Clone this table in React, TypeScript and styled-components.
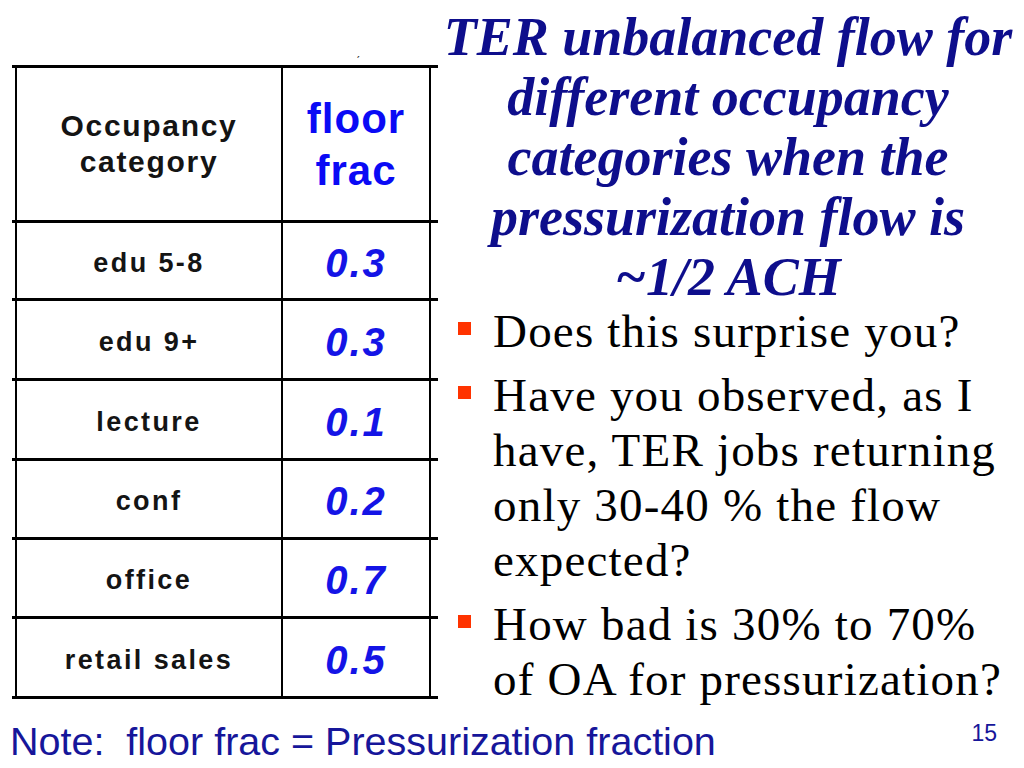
import React from "react";
import styled, { createGlobalStyle } from "styled-components";

const GlobalStyle = createGlobalStyle`
  html, body { margin: 0; padding: 0; background: #ffffff; }
  body { width: 1024px; height: 768px; overflow: hidden; }
`;

const Slide = styled.div`
  width: 1024px;
  height: 768px;
  display: flex;
  flex-direction: column;
  background: #ffffff;
`;

const Main = styled.div`
  height: 718px;
  display: grid;
  grid-template-columns: 440px 1fr;
`;

const LeftCol = styled.div`
  position: relative;
  padding: 65px 0 0 12px;
`;

const Tick = styled.span`
  position: absolute;
  left: 356px;
  top: 44px;
  font: 12px "Liberation Sans", Arial, sans-serif;
  color: #333;
`;

const Table = styled.div`
  width: 426px;
  border-bottom: 3px solid #000;
  font-family: "Liberation Sans", Arial, sans-serif;
`;

const Row = styled.div<{ $h: number }>`
  height: ${(p) => p.$h}px;
  box-sizing: border-box;
  border-top: 3px solid #000;
  display: grid;
  grid-template-columns: 266px 150px;
  padding-left: 3px;
`;

const CatCell = styled.div<{ $head?: boolean }>`
  border-left: 2px solid #000;
  display: flex;
  align-items: center;
  justify-content: center;
  text-align: center;
  color: #141414;
  font-weight: 700;
  font-size: ${(p) => (p.$head ? 30 : 27)}px;
  line-height: ${(p) => (p.$head ? 36 : 30)}px;
  letter-spacing: ${(p) => (p.$head ? 1.7 : 2.4)}px;
  padding-top: ${(p) => (p.$head ? 0 : 4)}px;
`;

const ValCell = styled.div<{ $head?: boolean }>`
  border-left: 2px solid #000;
  border-right: 2px solid #000;
  display: flex;
  align-items: center;
  justify-content: center;
  text-align: center;
  color: ${(p) => (p.$head ? "#0a0af5" : "#1414e6")};
  font-weight: 700;
  font-style: ${(p) => (p.$head ? "normal" : "italic")};
  font-size: ${(p) => (p.$head ? 42 : 40)}px;
  line-height: ${(p) => (p.$head ? 52 : 40)}px;
  letter-spacing: ${(p) => (p.$head ? 1 : 2)}px;
  padding-top: ${(p) => (p.$head ? 2 : 4)}px;
`;

const RightCol = styled.div`
  padding: 7px 8px 0 0;
`;

const Title = styled.h1`
  margin: 0;
  text-align: center;
  font-family: "Liberation Serif", "Times New Roman", serif;
  font-style: italic;
  font-weight: 700;
  font-size: 54px;
  line-height: 60px;
  color: #0e0e8c;
`;

const Bullets = styled.ul`
  list-style: none;
  margin: -3px 0 0 0;
  padding: 0 0 0 18px;
  display: flex;
  flex-direction: column;
  gap: 9px;
`;

const Item = styled.li`
  display: grid;
  grid-template-columns: 35px 1fr;
  font-family: "Liberation Serif", "Times New Roman", serif;
  font-size: 47px;
  line-height: 55px;
  letter-spacing: 1.2px;
  color: #000;
`;

const Marker = styled.span`
  width: 13px;
  height: 13px;
  margin-top: 18px;
  background: #ff3300;
`;

const Line = styled.span`
  display: block;
  white-space: nowrap;
`;

const Footer = styled.div`
  flex: 1;
  display: flex;
  justify-content: space-between;
  align-items: flex-start;
  padding: 0 27px 0 10px;
  font-family: "Liberation Sans", Arial, sans-serif;
  color: #16169a;
`;

const Note = styled.div`
  font-size: 39.5px;
  line-height: 46px;
  white-space: pre;
`;

const PageNum = styled.div`
  font-size: 23px;
  line-height: 23px;
  margin-top: 4px;
`;

const rows: [string, string, number][] = [
  ["edu 5-8", "0.3", 78],
  ["edu 9+", "0.3", 80],
  ["lecture", "0.1", 80],
  ["conf", "0.2", 79],
  ["office", "0.7", 79],
  ["retail sales", "0.5", 80],
];

const bullets: string[][] = [
  ["Does this surprise you?"],
  ["Have you observed, as I", "have, TER jobs returning", "only 30-40 % the flow", "expected?"],
  ["How bad is 30% to 70%", "of OA for pressurization?"],
];

export default function App() {
  return (
    <Slide>
      <GlobalStyle />
      <Main>
        <LeftCol>
          <Tick>ˏ</Tick>
          <Table>
            <Row $h={155}>
              <CatCell $head>
                Occupancy
                <br />
                category
              </CatCell>
              <ValCell $head>
                floor
                <br />
                frac
              </ValCell>
            </Row>
            {rows.map(([cat, val, h]) => (
              <Row key={cat} $h={h}>
                <CatCell>{cat}</CatCell>
                <ValCell>{val}</ValCell>
              </Row>
            ))}
          </Table>
        </LeftCol>
        <RightCol>
          <Title>
            TER unbalanced flow for
            <br />
            different occupancy
            <br />
            categories when the
            <br />
            pressurization flow is
            <br />
            ~1/2 ACH
          </Title>
          <Bullets>
            {bullets.map((lines, i) => (
              <Item key={i}>
                <Marker />
                <div>
                  {lines.map((l) => (
                    <Line key={l}>{l}</Line>
                  ))}
                </div>
              </Item>
            ))}
          </Bullets>
        </RightCol>
      </Main>
      <Footer>
        <Note>Note:  floor frac = Pressurization fraction</Note>
        <PageNum>15</PageNum>
      </Footer>
    </Slide>
  );
}
